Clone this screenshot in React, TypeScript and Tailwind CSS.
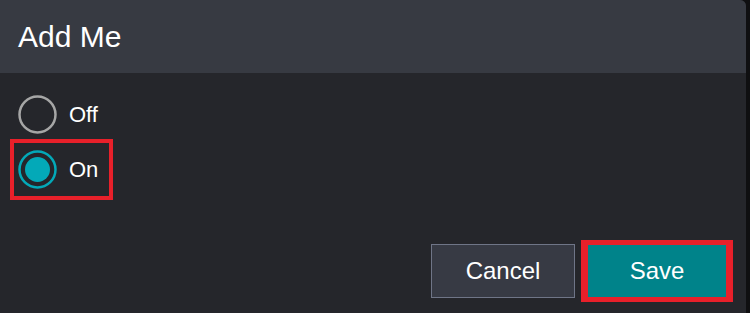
function Radio({ checked }: { checked: boolean }) {
  return (
    <svg width="39" height="39" viewBox="0 0 39 39" className="shrink-0">
      <circle
        cx="19.5"
        cy="19.5"
        r="18"
        fill="none"
        stroke={checked ? '#03a9b8' : '#a6a6a6'}
        strokeWidth="2.5"
      />
      {checked && <circle cx="19.5" cy="19.5" r="12.5" fill="#03a9b8" />}
    </svg>
  );
}

export default function App() {
  return (
    <div className="h-[313px] w-[750px] bg-[#0f0f11] font-['Liberation_Sans',Arial,sans-serif] text-white">
      <div className="flex h-full w-[746px] flex-col overflow-hidden rounded-tr-[6px] bg-[#25262b]">
        {/* Title */}
        <div className="flex h-[73px] shrink-0 items-center bg-[#373a42] px-[18px]">
          <h1 className="text-[30px] leading-none">Add Me</h1>
        </div>

        {/* Options */}
        <div className="flex flex-col items-start">
          <label className="ml-[18px] mt-[22px] flex h-[39px] items-center gap-[12px]">
            <Radio checked={false} />
            <span className="text-[22px]">Off</span>
          </label>
          <label className="ml-[10px] mt-[5px] flex h-[61px] w-[103px] items-center gap-[12px] border-[4px] border-[#e8202a] pl-[4px]">
            <Radio checked />
            <span className="text-[22px]">On</span>
          </label>
        </div>

        {/* Actions */}
        <div className="mt-auto flex items-center justify-end gap-[6px] pb-[11px] pr-[13px]">
          <button className="h-[54px] w-[144px] border border-[#6f7587] bg-[#373a44] text-[24px]">
            Cancel
          </button>
          <div className="border-x-[7px] border-y-[5px] border-[#e8202a]">
            <button className="block h-[52px] w-[138px] bg-[#00838a] text-[24px]">Save</button>
          </div>
        </div>
      </div>
    </div>
  );
}
